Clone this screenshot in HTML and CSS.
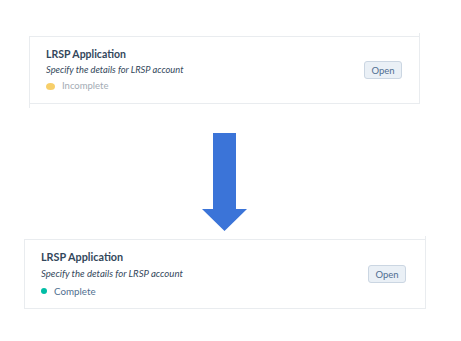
FILE: index.html
```html
<!DOCTYPE html>
<html lang="en">
<head>
    <meta charset="UTF-8">
    <meta name="viewport" content="width=device-width, initial-scale=1.0">
    <title>LRSP Application status</title>
    <link rel="stylesheet" href="styles.css">
</head>
<body>
    <div class="page">
        <div class="task-row task-row--before">
            <div class="task-info">
                <div class="task-title">LRSP Application</div>
                <div class="task-desc">Specify the details for LRSP account</div>
                <div class="task-status status-incomplete">
                    <span class="dot"></span>
                    <span>Incomplete</span>
                </div>
            </div>
            <button class="open-button">Open</button>
        </div>

        <div class="arrow">
            <svg width="46" height="98" viewBox="0 0 46 98">
                <polygon points="11,0 34,0 34,76 45,76 22.5,98 0,76 11,76" fill="#3b74d8"/>
            </svg>
        </div>

        <div class="task-row task-row--after">
            <div class="task-info">
                <div class="task-title">LRSP Application</div>
                <div class="task-desc">Specify the details for LRSP account</div>
                <div class="task-status status-complete">
                    <span class="dot"></span>
                    <span>Complete</span>
                </div>
            </div>
            <button class="open-button">Open</button>
        </div>
    </div>
</body>
</html>
```

FILE: styles.css
```css
body {
    margin: 0;
    background-color: white;
    font-family: Lato, "Open Sans", sans-serif;
    color: #33475b;
}

.page {
    padding-top: 36px;
}

.task-row {
    position: relative;
    display: flex;
    align-items: center;
    justify-content: space-between;
    border: 1px solid #e9ecef;
    padding: 8px 17px 8px 16px;
    box-sizing: border-box;
}

/* side lines run a bit past the row, like a cropped table */
.task-row::before,
.task-row::after {
    content: "";
    position: absolute;
    width: 1px;
    background-color: #e9ecef;
}

.task-row::before {
    left: -1px;
    bottom: -5px;
    height: 5px;
}

.task-row::after {
    right: -1px;
    top: -4px;
    height: 4px;
}

.task-row--before {
    margin-left: 29px;
    width: 391px;
    height: 68px;
}

.task-row--after {
    margin-left: 24px;
    width: 402px;
    height: 70px;
    padding-right: 19px;
}

.task-title {
    font-size: 10.5px;
    font-weight: bold;
    line-height: 16px;
}

.task-desc {
    font-size: 9.3px;
    font-style: italic;
    line-height: 16px;
}

.task-status {
    display: flex;
    align-items: center;
    gap: 7px;
    font-size: 9.5px;
    line-height: 16px;
}

.task-row--after .task-title {
    font-size: 10.8px;
    line-height: 17px;
}

.task-row--after .task-desc {
    font-size: 9.6px;
    line-height: 17px;
}

.task-row--after .task-status {
    font-size: 9.8px;
    line-height: 18px;
}

.dot {
    width: 9px;
    height: 7px;
    border-radius: 50%;
}

.status-incomplete {
    color: #a3abb4;
}

.status-incomplete .dot {
    background-color: #f7cf6a;
}

.status-complete {
    color: #516f90;
}

.status-complete .dot {
    width: 6px;
    height: 6px;
    background-color: #00bda5;
}

.open-button {
    width: 38px;
    height: 18px;
    padding: 0;
    background-color: #eaf0f6;
    border: 1px solid #cbd6e2;
    border-radius: 3px;
    color: #506e91;
    font-family: Lato, sans-serif;
    font-size: 9.5px;
}

.arrow {
    padding: 29px 0 8px 202px;
}

.arrow svg {
    display: block;
}
```
